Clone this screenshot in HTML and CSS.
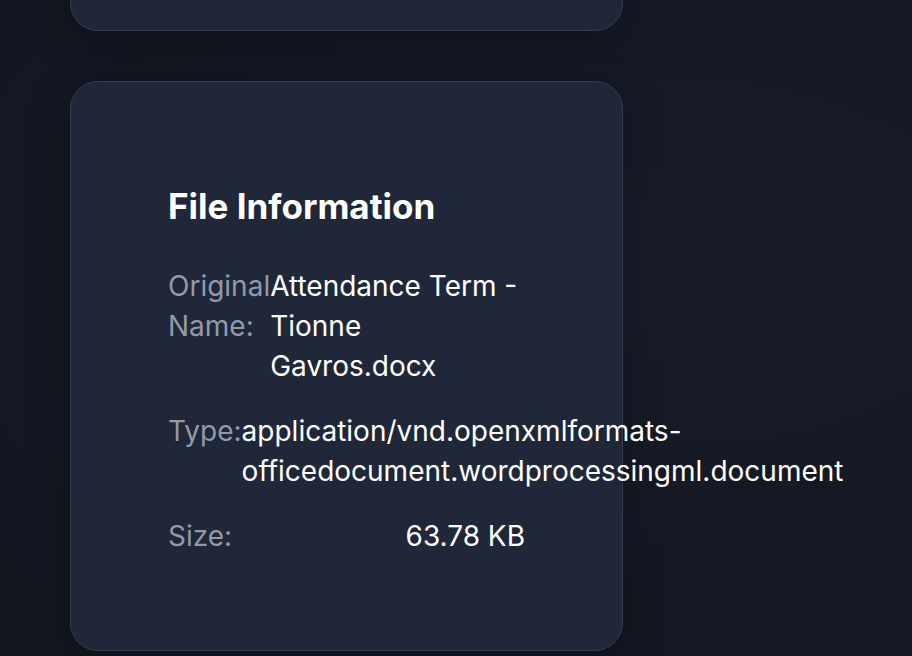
FILE: index.html
```html
<!DOCTYPE html>
<html lang="en">
<head>
<meta charset="utf-8">
<title>File Information</title>
<link rel="stylesheet" href="styles.css">
</head>
<body>
<div class="page">
  <section class="card card-top"></section>
  <section class="card info">
    <h2 class="title">File Information</h2>
    <dl class="rows">
      <div class="row">
        <dt class="label">Original Name:</dt>
        <dd class="value">Attendance Term - Tionne Gavros.docx</dd>
      </div>
      <div class="row">
        <dt class="label">Type:</dt>
        <dd class="value">application/vnd.openxmlformats-officedocument.wordprocessingml.document</dd>
      </div>
      <div class="row">
        <dt class="label">Size:</dt>
        <dd class="value">63.78 KB</dd>
      </div>
    </dl>
  </section>
</div>
</body>
</html>
```

FILE: styles.css
```css
html, body {
  margin: 0;
  padding: 0;
  height: 100%;
  overflow: hidden;
}
body {
  background: radial-gradient(ellipse at 75% 40%, #171c28 0%, #141823 60%, #131720 100%);
  font-family: Inter, "Noto Sans", sans-serif;
  color: #ffffff;
}
.page {
  display: flex;
  flex-direction: column;
  gap: 50px;
  padding-left: 70px;
  margin-top: -200px;
}
.card {
  width: 553px;
  box-sizing: border-box;
  background: #1f2738;
  border: 1px solid #343d50;
  border-radius: 28px;
  box-shadow: 0 10px 40px rgba(0, 0, 0, 0.25);
}
.card-top {
  height: 231px;
}
.info {
  height: 570px;
  padding: 100px 97px 0 97px;
}
.title {
  margin: 0 0 36px 0;
  font-size: 35px;
  font-weight: 700;
  line-height: 48px;
}
.rows {
  margin: 0;
  display: flex;
  flex-direction: column;
  gap: 25px;
}
.row {
  display: flex;
  justify-content: space-between;
  gap: 0;
  font-size: 28px;
  line-height: 40px;
}
.label {
  margin: 0;
  color: #929aa8;
}
.value {
  margin: 0;
  color: #ffffff;
}
```
